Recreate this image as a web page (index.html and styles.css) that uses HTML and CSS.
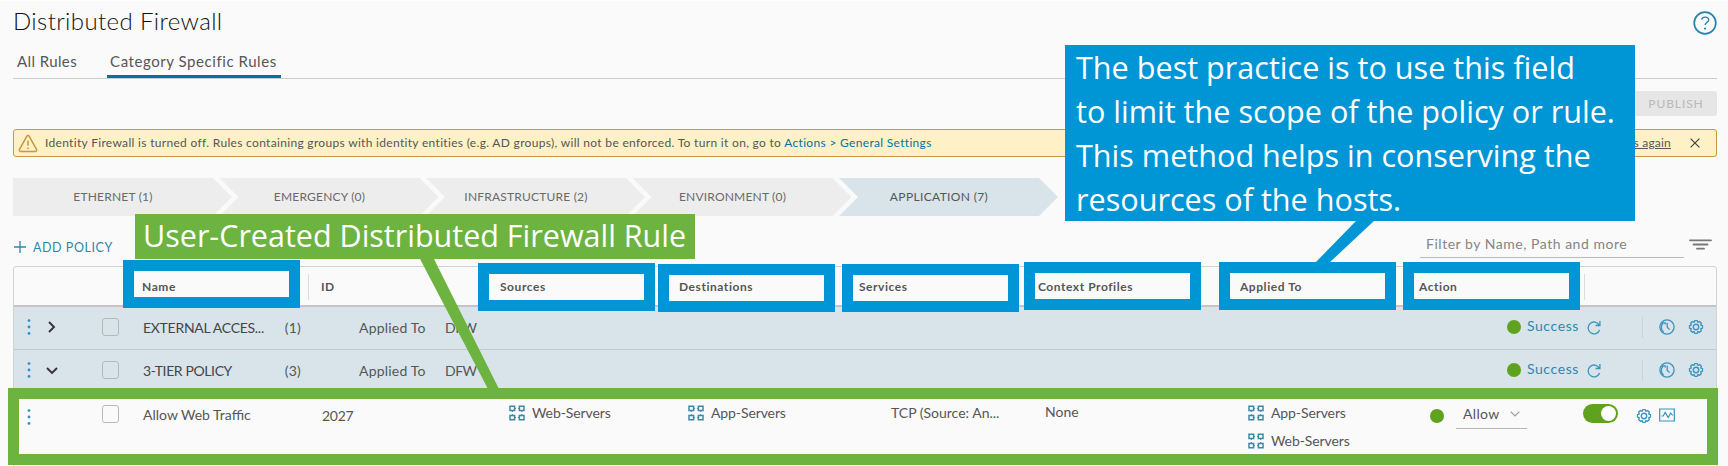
FILE: index.html
```html
<!DOCTYPE html>
<html lang="en">
<head>
<meta charset="utf-8">
<title>Distributed Firewall</title>
<link rel="stylesheet" href="styles.css">
</head>
<body>
<svg width="0" height="0" class="defs">
  <symbol id="group" viewBox="0 0 16 16"><path d="M1 1.200h4.600v4.400H1zM10.400 1.200H15v4.400h-4.600zM1 10.400h4.600v4.400H1zM10.400 10.400H15v4.400h-4.600z" fill="none" stroke="#3f87a6" stroke-width="1.500"/><path d="M5.600 3.400h4.800M5.600 12.600h4.800M3.300 5.600v4.800M12.700 5.600v4.800" fill="none" stroke="#3f87a6" stroke-width="1" stroke-dasharray="1.400 2 1.400"/></symbol>
  <symbol id="gear" viewBox="0 0 16 16"><path d="M6.700 1h2.600l.6 1.700 1.700-.8 1.800 1.800-.8 1.700 1.900.6v2.600l-1.900.6.8 1.700-1.800 1.800-1.700-.8-.6 1.900H6.700l-.6-1.900-1.700.8-1.800-1.800.8-1.700-1.900-.6V6l1.900-.6-.8-1.700 1.800-1.800 1.700.8z" transform="translate(0 .6)" fill="none" stroke="#3a93bd" stroke-width="1.300" stroke-linejoin="round"/><circle cx="8" cy="8" r="2.700" fill="none" stroke="#3a93bd" stroke-width="1.400"/></symbol>
  <symbol id="clock" viewBox="0 0 16 16"><circle cx="8" cy="8" r="7.100" fill="none" stroke="#3a93bd" stroke-width="1.300"/><path d="M4.600 13A6 6 0 0 1 4 4.200M2.800 3.800h3.400v1.600M8.200 3.800v4.400l2.400 2.400" fill="none" stroke="#3a93bd" stroke-width="1.300"/></symbol>
  <symbol id="refresh" viewBox="0 0 14 15"><path d="M12.300 5.200A5.900 5.900 0 1 0 12.600 10M12.900 1v4.500H8.600" fill="none" stroke="#3a93bd" stroke-width="1.300"/></symbol>
  <symbol id="dots" viewBox="0 0 4 16"><g fill="#2c93c9"><circle cx="2" cy="1.600" r="1.400"/><circle cx="2" cy="8" r="1.400"/><circle cx="2" cy="14.400" r="1.400"/></g></symbol>
</svg>

<div class="page">
  <header class="top">
    <h1>Distributed Firewall</h1>
    <svg class="help" viewBox="0 0 24 24"><circle cx="12" cy="12" r="10.800" fill="none" stroke="#2484ae" stroke-width="1.700"/><path d="M8.600 8.600c.4-1.700 1.800-2.500 3.500-2.500 2 0 3.600 1 3.600 2.800 0 2.400-3.600 2.400-3.600 5.200" fill="none" stroke="#2484ae" stroke-width="1.400"/><circle cx="12.100" cy="17.600" r="1.100" fill="#2484ae"/></svg>
  </header>

  <nav class="tabs">
    <a class="tab">All Rules</a>
    <a class="tab active">Category Specific Rules</a>
  </nav>

  <div class="toolbar"><button class="publish">PUBLISH</button></div>

  <div class="alert">
    <svg class="warn" viewBox="0 0 20 19"><path d="M8.900 2.200 1.500 15.400c-.5.9 0 2 1.100 2h14.800c1.100 0 1.600-1.100 1.100-2L11.100 2.200c-.5-.9-1.700-.9-2.200 0zM10 6.400v5.400M10 13.400v1.800" fill="none" stroke="#c8973a" stroke-width="1.500"/></svg>
    <span class="msg">Identity Firewall is turned off. Rules containing groups with identity entities (e.g. AD groups), will not be enforced. To turn it on, go to <a>Actions &gt; General Settings</a></span>
    <span class="dismiss">s again</span>
    <svg class="close" viewBox="0 0 10 10"><path d="M.6.6l8.800 8.800M9.400.6L.6 9.400" stroke="#444" stroke-width="1.200"/></svg>
  </div>

  <div class="steps">
    <div class="step">ETHERNET (1)</div>
    <div class="step">EMERGENCY (0)</div>
    <div class="step">INFRASTRUCTURE (2)</div>
    <div class="step">ENVIRONMENT (0)</div>
    <div class="step on">APPLICATION (7)</div>
  </div>

  <div class="actions">
    <div class="add"><svg viewBox="0 0 12 12"><path d="M6 0v12M0 6h12" stroke="#2f86ae" stroke-width="1.300"/></svg>ADD POLICY</div>
    <div class="filter">Filter by Name, Path and more</div>
    <svg class="funnel" viewBox="0 0 23 11"><path d="M1 1.300h21M4.500 5.500h14M8 9.700h7" stroke="#777" stroke-width="1.800" stroke-linecap="round"/></svg>
  </div>

  <div class="table">
    <div class="row head">
      <span></span><span>Name</span><span class="sep">ID</span><span>Sources</span><span>Destinations</span><span>Services</span><span>Context Profiles</span><span>Applied To</span><span>Action</span><span class="sep"></span>
    </div>
    <div class="row policy">
      <svg class="dots"><use href="#dots"/></svg>
      <svg class="caret" viewBox="0 0 12 12"><path d="M3 1l5 5-5 5" fill="none" stroke="#333" stroke-width="1.900"/></svg>
      <i class="box"></i>
      <span class="name ext">EXTERNAL ACCES...</span><span class="count">(1)</span>
      <span class="applied">Applied To</span><span class="dfw">DFW</span>
      <div class="status"><i class="led"></i><span>Success</span><svg class="refresh"><use href="#refresh"/></svg></div>
      <div class="tools"><svg class="ico"><use href="#clock"/></svg><svg class="ico"><use href="#gear"/></svg></div>
    </div>
    <div class="row policy">
      <svg class="dots"><use href="#dots"/></svg>
      <svg class="caret" viewBox="0 0 12 12"><path d="M1 4l5 5 5-5" fill="none" stroke="#333" stroke-width="1.900"/></svg>
      <i class="box"></i>
      <span class="name tier">3-TIER POLICY</span><span class="count">(3)</span>
      <span class="applied">Applied To</span><span class="dfw">DFW</span>
      <div class="status"><i class="led"></i><span>Success</span><svg class="refresh"><use href="#refresh"/></svg></div>
      <div class="tools"><svg class="ico"><use href="#clock"/></svg><svg class="ico"><use href="#gear"/></svg></div>
    </div>
    <div class="row rule">
      <svg class="dots"><use href="#dots"/></svg>
      <i class="box"></i>
      <span class="rname">Allow Web Traffic</span>
      <span class="rid">2027</span>
      <div class="grp"><svg class="ico"><use href="#group"/></svg>Web-Servers</div>
      <div class="grp"><svg class="ico"><use href="#group"/></svg>App-Servers</div>
      <span class="svc">TCP (Source: An...</span>
      <span class="none">None</span>
      <div class="stack">
        <div class="grp"><svg class="ico"><use href="#group"/></svg>App-Servers</div>
        <div class="grp"><svg class="ico"><use href="#group"/></svg>Web-Servers</div>
      </div>
      <i class="led"></i>
      <div class="select">Allow<svg viewBox="0 0 10 6"><path d="M.7.7L5 5 9.300.7" fill="none" stroke="#999" stroke-width="1.200"/></svg></div>
      <div class="toggle"><i></i></div>
      <svg class="ico"><use href="#gear"/></svg>
      <svg class="ico chart" viewBox="0 0 16 16"><path d="M.7 2h14.600v12H.7zM2.500 9l1.700 0 2-3.500 3 5 2.500-4.500 2 2.500" fill="none" stroke="#3a93bd" stroke-width="1.200"/></svg>
    </div>
  </div>

  <svg class="leaders" viewBox="0 0 1728 466"><path d="M419 257h14l66 132h-11z" fill="#6cb33f"/><path d="M1357 220h18l-46 43h-14z" fill="#0095d5"/></svg>
  <div class="mark name-m"></div>
  <div class="mark src-m"></div>
  <div class="mark dst-m"></div>
  <div class="mark svc-m"></div>
  <div class="mark ctx-m"></div>
  <div class="mark app-m"></div>
  <div class="mark act-m"></div>
  <div class="mark rule-m"></div>
  <div class="callout green">User-Created Distributed Firewall Rule</div>
  <div class="callout blue">The best practice is to use this field<br>to limit the scope of the policy or rule.<br>This method helps in conserving the<br>resources of the hosts.</div>
</div>
</body>
</html>
```
FILE: styles.css
```css
* { box-sizing: border-box; }
body { margin: 0; background: #fafafa; font-family: Lato, sans-serif; color: #565656; }
.defs { position: absolute; }
svg { display: block; flex: none; }
.page { position: relative; width: 1728px; height: 466px; padding: 0 11px 0 13px; overflow: hidden; border-top: 1px solid #fff; }

.top { display: flex; justify-content: space-between; height: 47px; }
h1 { margin: 4px 0 0; font-size: 24px; line-height: 31px; font-weight: 300; letter-spacing: .38px; color: #111; }
.help { width: 24px; height: 24px; margin: 10px 0 0; }

.tabs { display: flex; gap: 27px; height: 31px; border-bottom: 1px solid #ccc; font-size: 15px; line-height: 27px; color: #565656; }
.tab { padding: 0 3px 0 4px; height: 30px; letter-spacing: .4px; }
.tab.active { padding: 0 4px 0 3px; letter-spacing: .56px; border-bottom: 3px solid #0072a3; }

.toolbar { display: flex; justify-content: flex-end; height: 50px; padding-top: 12px; }
.publish { width: 88px; height: 25px; padding: 0 0 0 6px; border: 0; border-radius: 3px; background: #e6e6e6; color: #b9b9b9; font: 12px Lato, sans-serif; letter-spacing: .9px; }

.alert { display: flex; align-items: center; height: 28px; padding: 0 16px 0 4px; border: 1.500px solid #c79a3f; border-radius: 3px; background: #fef1c6; font-size: 12px; }
.warn { width: 20px; height: 19px; margin-right: 7px; }
.msg { flex: 1; letter-spacing: .315px; white-space: nowrap; padding-bottom: 1px; }
.msg a { color: #0072b0; }
.dismiss { margin-right: 19px; text-decoration: underline; letter-spacing: .2px; padding-bottom: 1px; }
.close { width: 10px; height: 10px; }

.steps { display: flex; margin-top: 21px; height: 38px; }
.step { width: 219px; margin-right: -12.500px; padding-right: 19px; background: #ededed; font-size: 12px; line-height: 38.500px; text-align: center; letter-spacing: .2px; color: #6a6a6a; clip-path: polygon(0 0, 200px 0, 100% 50%, 200px 100%, 0 100%, 19px 50%); }
.step:first-child { clip-path: polygon(0 0, 200px 0, 100% 50%, 200px 100%, 0 100%); }
.step.on { background: #d9e4ea; color: #565656; letter-spacing: .35px; }

.actions { display: flex; height: 50px; padding-right: 5px; }
.add { display: flex; align-items: center; height: 58px; margin-right: auto; font-size: 12.500px; letter-spacing: .55px; color: #2f86ae; padding: 5px 0 0 1px; }
.add svg { width: 12px; height: 12px; margin: 0 7px 2px 0; }
.filter { width: 264px; height: 41.500px; padding: 19px 0 0 6px; border-bottom: 1.500px solid #bbb; font-size: 14px; line-height: 17px; letter-spacing: .53px; color: #858585; }
.funnel { width: 23px; height: 11px; margin: 23px 0 0 5px; }

.table { height: 220px; border: 1px solid #d2d2d2; border-radius: 3px 3px 0 0; }
.row { display: grid; }
.head { grid-template-columns: 128px 166px 192px 179px 180px 179px 202px 179px 165px 1fr; height: 40px; border-bottom: 2px solid #c5c5c5; align-items: center; font-size: 12px; font-weight: 700; letter-spacing: .55px; line-height: 26px; color: #565656; padding-top: 1px; }
.head > span { white-space: nowrap; height: 26px; }
.head .sep { border-left: 1px solid #ddd; padding-left: 12px; }

.policy { grid-template-columns: 19px 56px 41px 128px 30px 57px 86px 1fr 75px; height: 43px; align-items: center; background: #d9e4ea; border-bottom: 1px solid #c4c9cb; padding: 0 12px 2px 13px; font-size: 14px; letter-spacing: .2px; color: #565656; }
.dots { width: 4px; height: 16px; }
.caret { width: 12px; height: 12px; }
.box { display: block; width: 17px; height: 18px; border: 1.500px solid #b5b8ba; border-radius: 3px; }
.name { color: #454545; white-space: nowrap; }
.ext { letter-spacing: -.28px; }
.tier { letter-spacing: -.38px; }
.count { text-align: right; }
.applied { padding-left: 58px; width: 140px; white-space: nowrap; }
.dfw { padding-left: 87px; padding-top: 1px; letter-spacing: -.5px; }
.status { justify-self: end; display: flex; align-items: center; margin-right: 28px; color: #2f86ae; letter-spacing: .6px; }
.led { display: block; flex: none; width: 14px; height: 14px; border-radius: 50%; background: #5ea21e; }
.status span { margin: -3px 8px 0 6px; }
.refresh { width: 14px; height: 15px; }
.tools { display: flex; align-items: center; justify-content: space-between; box-sizing: content-box; width: 45px; height: 21px; padding-left: 16px; border-left: 1.500px solid #ccd2d6; margin-left: 13px; }
.ico { width: 16px; height: 16px; }

.rule { grid-template-columns: 75px 41px 179px 187px 179px 203px 154px 203px 182px 26px 127px 53px 23px 16px; align-items: start; padding: 11px 0 0 13px; font-size: 14px; line-height: 18px; color: #565656; }
.rule .dots { margin-top: 5px; }
.rule .box { margin-top: 1px; }
.rname { padding-top: 1.500px; }
.rid { padding-top: 3px; letter-spacing: -.3px; }
.none { margin-top: -1px; }
.grp { display: flex; align-items: center; gap: 7px; letter-spacing: -.1px; }
.stack { display: grid; gap: 10px; }
.rule .led { margin-top: 5px; }
.select { display: flex; align-items: center; width: 71px; height: 25px; padding: 0 7px 4px; justify-content: space-between; border-bottom: 1.500px solid #b5b5b5; letter-spacing: .35px; }
.select svg { width: 10px; height: 6px; }
.toggle { width: 35px; height: 19px; padding: 2px; border-radius: 10px; background: #5ea21e; }
.toggle i { display: block; width: 15px; height: 15px; border-radius: 50%; background: #fff; margin-left: auto; }
.rule > .ico { margin-top: 4px; }
.rule > .chart { margin-top: 3px; }

/* Annotation layer drawn above the console */
.page > .leaders { position: absolute; left: 0; top: -1px; width: 1728px; height: 466px; }
.mark { position: absolute; width: 177px; height: 48px; border: 11px solid #0095d5; }
.name-m { left: 123px; top: 259px; }
.src-m { left: 478px; top: 262px; }
.dst-m { left: 658px; top: 263px; }
.svc-m { left: 842px; top: 263px; }
.ctx-m { left: 1024px; top: 261px; }
.app-m { left: 1219px; top: 261px; }
.act-m { left: 1403px; top: 261px; }
.rule-m { left: 8px; top: 387px; width: 1710px; height: 77px; border-color: #6cb33f; }
.callout { position: absolute; color: #fff; font-family: "Open Sans", sans-serif; font-size: 30.600px; white-space: nowrap; }
.green { left: 135px; top: 213px; width: 560px; height: 45px; padding-left: 8px; line-height: 42px; background: #6cb33f; font-size: 30.500px; }
.blue { left: 1065px; top: 44px; width: 570px; height: 176px; padding-left: 11px; line-height: 44px; background: linear-gradient(#0095d5, #0095d5); }
.blue::first-line { line-height: 41px; }
```
